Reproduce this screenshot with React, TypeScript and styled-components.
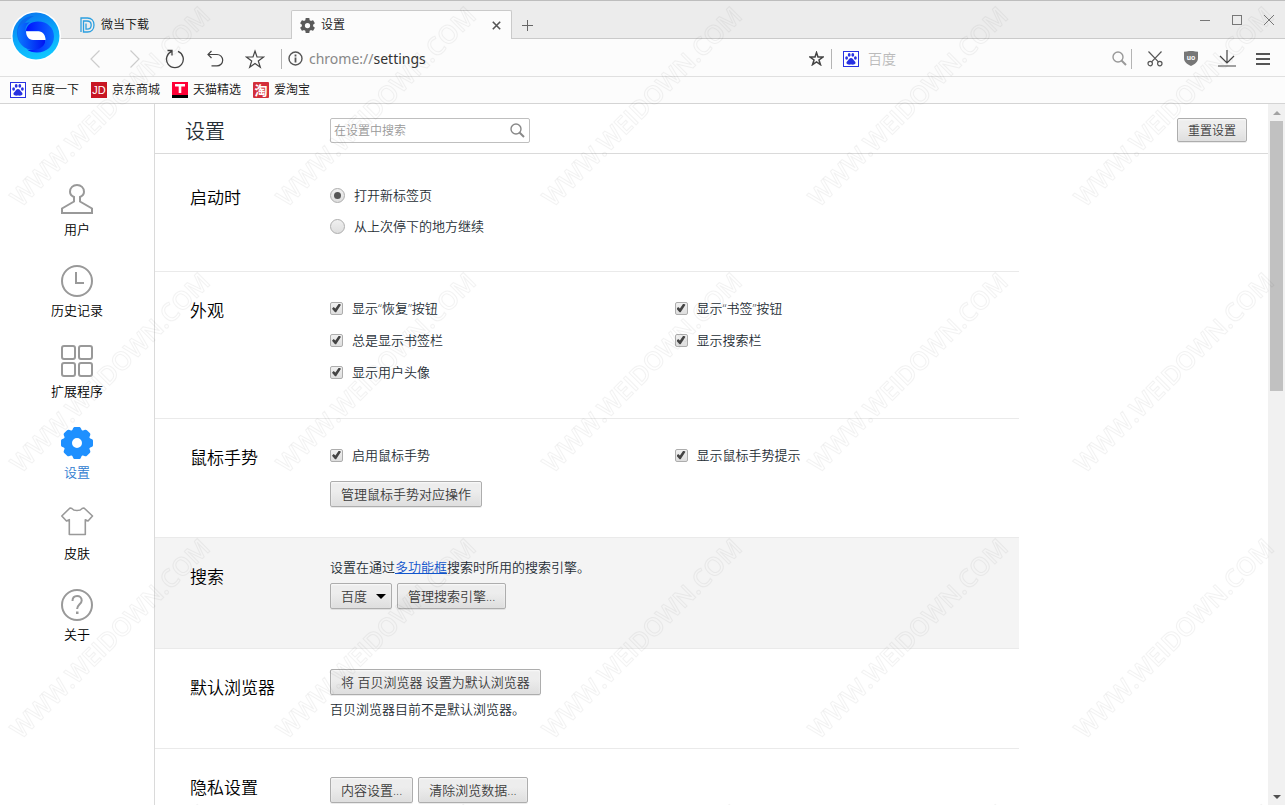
import React from "react";
import styled, { createGlobalStyle, css } from "styled-components";

const Global = createGlobalStyle`
  *, *::before, *::after { box-sizing: border-box; }
  body { margin: 0; background: #fff; overflow: hidden; }
  body, button, input, select {
    font-family: "Open Sans", "Noto Sans CJK SC", sans-serif;
    font-weight: 350;
  }
  button, input, select { margin: 0; padding: 0; }
`;

const Window = styled.div`
  position: relative;
  display: flex;
  flex-direction: column;
  height: 100vh;
  overflow: hidden;
  color: #262e36;
  font-size: 13px;
  line-height: 18px;
`;

const Watermark = styled.svg`
  position: absolute;
  inset: 0;
  width: 100%;
  height: 100%;
  pointer-events: none;
  text {
    font-family: "Open Sans", sans-serif;
    font-size: 25px;
    font-weight: 600;
    fill: none;
    stroke: rgba(0, 0, 0, 0.05);
    stroke-width: 1;
  }
`;

const Logo = styled.svg`
  position: absolute;
  left: 11px;
  top: 11px;
  width: 50px;
  height: 50px;
`;

const TabBar = styled.header`
  display: flex;
  align-items: flex-end;
  height: 39px;
  padding-left: 71px;
  border-top: 1px solid #bdbdbd;
  background: #ececec;
  box-shadow: inset 0 -1px #cacaca;
`;

const Tab = styled.div<{ $active?: boolean }>`
  display: flex;
  align-items: center;
  gap: 6px;
  width: ${(p) => (p.$active ? 221 : 220)}px;
  height: 29px;
  padding: 0 9px 0 8px;
  border: 1px solid transparent;
  border-bottom: 0;
  color: #111;
  font-size: 12px;
  ${(p) =>
    p.$active &&
    css`
      border-color: #cacaca;
      border-radius: 2px 2px 0 0;
      background: #fcfcfc;
    `}
`;

const TabTitle = styled.span`
  flex: 1;
`;

const IconButton = styled.button<{ $w?: number }>`
  display: flex;
  align-items: center;
  justify-content: center;
  flex: none;
  width: ${(p) => p.$w ?? 20}px;
  height: 28px;
  border: 0;
  background: none;
  svg { display: block; }
`;

const TabClose = styled(IconButton)`
  height: 20px;
`;

const WindowControls = styled.div`
  display: flex;
  align-self: flex-start;
  margin-left: auto;
  padding-top: 5px;
`;

const Toolbar = styled.div`
  display: flex;
  align-items: center;
  height: 38px;
  padding: 2px 9px 0 75px;
  border-bottom: 1px solid #e0e0e0;
  background: #fcfcfc;
`;

const Divider = styled.span`
  width: 1px;
  height: 20px;
  background: #b4b4b4;
`;

const Address = styled.div`
  display: flex;
  flex: 1;
  align-items: center;
  gap: 6px;
  margin-left: 6px;
  padding-left: 6px;
  border-left: 1px solid #b4b4b4;
  color: #888;
  font-family: "Noto Sans", sans-serif;
  font-size: 14px;
  font-weight: 400;
  line-height: 20px;
  b { font-weight: 400; color: #333; }
`;

const SearchBox = styled.label`
  display: flex;
  align-items: center;
  gap: 9px;
  width: 299px;
  padding: 0 4px 0 11px;
`;

const SearchInput = styled.input`
  flex: 1;
  min-width: 0;
  border: 0;
  outline: 0;
  background: none;
  font-size: 14px;
  &::placeholder { color: #bbb; }
`;

const Bookmarks = styled.nav`
  display: flex;
  align-items: center;
  gap: 12px;
  height: 27px;
  padding-left: 10px;
  border-bottom: 1px solid #d4d4d4;
  background: #fcfcfc;
`;

const Bookmark = styled.a`
  display: flex;
  align-items: center;
  gap: 5px;
  color: #111;
  font-size: 12px;
  text-decoration: none;
`;

const Body = styled.div`
  display: flex;
  flex: 1;
  min-height: 0;
`;

const Sidebar = styled.nav`
  display: flex;
  flex-direction: column;
  align-items: center;
  gap: 26px;
  width: 155px;
  padding-top: 79px;
  border-right: 1px solid #dadada;
`;

const SideLink = styled.a<{ $active?: boolean }>`
  display: flex;
  flex-direction: column;
  align-items: center;
  gap: 5px;
  color: ${(p) => (p.$active ? "#2f7bd0" : "#000")};
  text-decoration: none;
  svg { display: block; overflow: visible; }
`;

const Main = styled.main`
  display: flex;
  flex: 1;
  flex-direction: column;
  min-width: 0;
  overflow: hidden;
`;

const PageHeader = styled.div`
  display: flex;
  flex: none;
  align-items: center;
  height: 50px;
  padding: 3px 21px 0 30px;
  border-bottom: 1px solid #dadada;
`;

const PageTitle = styled.h1`
  width: 145px;
  margin: 0;
  padding-top: 3px;
  font-size: 20px;
  font-weight: 350;
  line-height: 28px;
`;

const SettingsSearch = styled.label`
  display: flex;
  align-items: center;
  width: 200px;
  height: 25px;
  padding: 0 4px 0 3px;
  border: 1px solid #bfbfbf;
  border-radius: 2px;
  input { font-size: 12px; }
  input::placeholder { color: #999; }
`;

const ResetSlot = styled.div`
  margin-left: auto;
`;

const buttonFace = css`
  border: 1px solid #adadad;
  border-radius: 2px;
  background: linear-gradient(#ededed 38%, #dedede);
  box-shadow: 0 1px 0 rgba(0, 0, 0, 0.08), inset 0 1px 2px rgba(255, 255, 255, 0.75);
  color: #3c3c3c;
`;

const Button = styled.button<{ $small?: boolean }>`
  ${buttonFace}
  display: block;
  height: ${(p) => (p.$small ? 24 : 26)}px;
  padding: 0 10px ${(p) => (p.$small ? 0 : 2)}px;
  font-size: ${(p) => (p.$small ? 12 : 13)}px;
`;

const SelectBox = styled.span`
  position: relative;
  &::after {
    content: "";
    position: absolute;
    right: 6px;
    top: 11px;
    border: 5px solid transparent;
    border-top-color: #000;
    border-bottom: 0;
    pointer-events: none;
  }
`;

const Select = styled.select`
  ${buttonFace}
  display: block;
  appearance: none;
  width: 62px;
  height: 26px;
  padding: 0 10px 1px;
  font-size: 13px;
`;

const Sections = styled.div`
  max-width: 864px;
  padding-top: 5px;
`;

const SectionBox = styled.section<{ $bottom: number; $top: number; $shaded?: boolean }>`
  display: flex;
  align-items: flex-start;
  padding: ${(p) => p.$top}px 0 ${(p) => p.$bottom}px 35px;
  border-bottom: 1px solid #eaeaea;
  background: ${(p) => (p.$shaded ? "#f4f4f4" : "none")};
`;

const SectionTitle = styled.h2<{ $top: number }>`
  flex: none;
  width: 140px;
  margin: ${(p) => 28 - p.$top}px 0 0;
  color: #000;
  font-size: 17px;
  font-weight: 350;
  line-height: 22px;
`;

const Stack = styled.div<{ $gap: number }>`
  display: flex;
  flex: 1;
  flex-direction: column;
  gap: ${(p) => p.$gap}px;
`;

const Options = styled.div`
  display: grid;
  grid-template-columns: 1fr 1fr;
  row-gap: 16px;
`;

const Row = styled.div`
  display: flex;
  gap: 5px;
`;

const Text = styled.p`
  margin: 0;
  a { color: #15c; }
`;

const Option = styled.label`
  display: flex;
  align-items: center;
  gap: 9px;
  height: 16px;
`;

const boxFace = css`
  display: grid;
  place-items: center;
  flex: none;
  appearance: none;
  border: 1px solid #adadad;
  background: linear-gradient(#f0f0f0, #dedede);
`;

const Checkbox = styled.input`
  ${boxFace}
  width: 13px;
  height: 13px;
  border-radius: 2px;
  &:checked::before {
    content: "";
    width: 9px;
    height: 9px;
    background: #444;
    clip-path: polygon(0 58%, 18% 40%, 38% 56%, 76% 0, 100% 14%, 46% 98%, 34% 98%);
  }
`;

const Radio = styled.input`
  ${boxFace}
  width: 15px;
  height: 15px;
  border-radius: 50%;
  &:checked::before {
    content: "";
    width: 7px;
    height: 7px;
    border-radius: 50%;
    background: #555;
  }
`;

const Scrollbar = styled.div`
  display: flex;
  flex-direction: column;
  align-items: center;
  width: 17px;
  background: #f1f1f1;
`;

const ScrollArrow = styled.span<{ $down?: boolean }>`
  display: flex;
  align-items: center;
  justify-content: center;
  height: 17px;
  &::before {
    content: "";
    border: 4px solid transparent;
    ${(p) =>
      p.$down
        ? "border-top-color: #505050; border-bottom: 0;"
        : "border-bottom-color: #a3a3a3; border-top: 0;"}
  }
`;

const Thumb = styled.span`
  width: 13px;
  height: 270px;
  margin-bottom: auto;
  background: #c1c1c1;
`;

const Gear = ({ size, color }: { size: number; color: string }) => (
  <svg width={size} height={size} viewBox="2 2 20 20" fill={color}>
    <path d="M19.43 12.98c.04-.32.07-.64.07-.98s-.03-.66-.07-.98l2.11-1.65c.19-.15.24-.42.12-.64l-2-3.46c-.12-.22-.39-.3-.61-.22l-2.49 1c-.52-.4-1.08-.73-1.69-.98l-.38-2.65C14.46 2.18 14.25 2 14 2h-4c-.25 0-.46.18-.49.42l-.38 2.65c-.61.25-1.17.59-1.69.98l-2.49-1c-.23-.09-.49 0-.61.22l-2 3.46c-.13.22-.07.49.12.64l2.11 1.65c-.04.32-.07.65-.07.98s.03.66.07.98l-2.11 1.65c-.19.15-.24.42-.12.64l2 3.46c.12.22.39.3.61.22l2.49-1c.52.4 1.08.73 1.69.98l.38 2.65c.03.24.24.42.49.42h4c.25 0 .46-.18.49-.42l.38-2.65c.61-.25 1.17-.59 1.69-.98l2.49 1c.23.09.49 0 .61-.22l2-3.46c.12-.22.07-.49-.12-.64l-2.11-1.65zM12 15.500a3.500 3.500 0 1 1 0-7 3.500 3.500 0 0 1 0 7z" />
  </svg>
);

const Paw = () => (
  <svg width="16" height="16" viewBox="0 0 16 16">
    <rect x=".5" y=".5" width="15" height="15" fill="#fff" stroke="#2932e1" />
    <g fill="#2932e1">
      <ellipse cx="3.600" cy="7" rx="1.400" ry="1.700" />
      <ellipse cx="6.200" cy="3.900" rx="1.400" ry="1.800" />
      <ellipse cx="9.800" cy="3.900" rx="1.400" ry="1.800" />
      <ellipse cx="12.400" cy="7" rx="1.400" ry="1.700" />
      <path d="M8 7c1.500 0 2 1.400 3 2.400 1.200 1.100 1.900 2 1.400 3.200-.6 1.300-2.500 1-4.400 1s-3.800.3-4.400-1c-.5-1.200.2-2.100 1.400-3.200 1-1 1.500-2.400 3-2.400z" />
    </g>
  </svg>
);

const Magnifier = ({ color }: { color: string }) => (
  <svg width="15" height="15" viewBox="0 0 15 15" fill="none" stroke={color}>
    <circle cx="6" cy="6" r="5" strokeWidth="1.400" />
    <path d="M9.500 9.500l4.500 4.500" strokeWidth="2" />
  </svg>
);

const Star = ({ size, width }: { size: number; width: number }) => (
  <svg width={size} height={size} viewBox="0 0 20 20" fill="none" stroke="#444" strokeWidth={width}>
    <path d="M10 2l2 5.900 6.600.1-5.300 4 2 6.200L10 14.500l-5.300 3.700 2-6.200-5.300-4L8 7.900z" />
  </svg>
);

const Badge = styled.svg`
  width: 16px;
  height: 16px;
  text {
    fill: #fff;
    font-family: "Liberation Sans", "Noto Sans CJK SC", sans-serif;
    font-weight: 700;
    text-anchor: middle;
  }
`;

const SideIcon = ({ children }: { children: React.ReactNode }) => (
  <svg width="32" height="32" viewBox="0 0 32 32" fill="none" stroke="#999" strokeWidth="2">
    {children}
  </svg>
);

const sideItems = [
  {
    label: "用户",
    icon: (
      <SideIcon>
        <path d="M13 18.500v-4.500C10.500 13 9 11 9 8.800 9 4.800 12 2 16 2s7 2.800 7 6.800c0 2.200-1.500 4.200-4 5.200v4.500L31 25.500V30H1v-4.500z" />
      </SideIcon>
    ),
  },
  {
    label: "历史记录",
    icon: (
      <SideIcon>
        <circle cx="16" cy="17" r="15" />
        <path d="M15 8v11h8" />
      </SideIcon>
    ),
  },
  {
    label: "扩展程序",
    icon: (
      <SideIcon>
        <rect x="1" y="1" width="13" height="13" rx="2" />
        <rect x="18" y="1" width="13" height="13" rx="2" />
        <rect x="1" y="18" width="13" height="13" rx="2" />
        <rect x="18" y="18" width="13" height="13" rx="2" />
      </SideIcon>
    ),
  },
  {
    label: "设置",
    active: true,
    icon: (
      <svg width="32" height="32" viewBox="0 -1 32 32" fill="#1e90ff">
        <path d="M16 2.500a13.500 13.500 0 1 0 0 27 13.500 13.500 0 0 0 0-27zm0 8.500a5 5 0 1 1 0 10 5 5 0 0 1 0-10z" fillRule="evenodd" />
        {[0, 45, 90, 135, 180, 225, 270, 315].map((angle) => (
          <path key={angle} transform={`rotate(${angle} 16 16)`} d="M10.500 5l1.500-3.500c.4-1 1-1.500 2-1.500h4c1 0 1.600.5 2 1.500L21.500 5z" />
        ))}
      </svg>
    ),
  },
  {
    label: "皮肤",
    icon: (
      <SideIcon>
        <path
          strokeWidth="1.600"
          strokeLinejoin="round"
          d="M11 1.600 9 1 .8 9l4.700 5 2.800-1.300V27.500h16V12.700l2.700 1.300 4.500-5L23 1l-2 .6c-1.800 2.600-8.200 2.600-10 0z"
        />
      </SideIcon>
    ),
  },
  {
    label: "关于",
    icon: (
      <SideIcon>
        <circle cx="16" cy="17" r="15" />
        <path d="M11.500 13c0-3.200 2-5 4.600-5s4.600 1.700 4.600 4.400c0 3.600-4.600 4.200-4.600 8.600" />
        <path d="M15 23.500h2.500v2.500H15z" fill="#999" stroke="none" />
      </SideIcon>
    ),
  },
];

const CheckOption = ({ children }: { children: React.ReactNode }) => (
  <Option>
    <Checkbox type="checkbox" defaultChecked />
    {children}
  </Option>
);

type SectionProps = {
  title: string;
  top?: number;
  bottom: number;
  gap?: number;
  shaded?: boolean;
  children: React.ReactNode;
};

const Section = ({ title, top = 28, bottom, gap = 7, shaded, children }: SectionProps) => (
  <SectionBox $top={top} $bottom={bottom} $shaded={shaded}>
    <SectionTitle $top={top}>{title}</SectionTitle>
    <Stack $gap={gap}>{children}</Stack>
  </SectionBox>
);

export default function App() {
  return (
    <Window>
      <Global />
      <TabBar>
        <Tab>
          <svg width="15" height="16" viewBox="0 0 15 16" fill="none" stroke="#2b9fe0" strokeWidth="1.300">
            <path d="M1 15V1h6.500c4 0 6.500 3 6.500 7s-2.500 7-6.500 7H3.500V4H7c2.800 0 4.200 1.500 4.200 4S9.800 12.200 7 12.200H6V6.500" />
          </svg>
          <TabTitle>微当下载</TabTitle>
        </Tab>
        <Tab $active>
          <Gear size={15} color="#5a5a5a" />
          <TabTitle>设置</TabTitle>
          <TabClose $w={12} aria-label="关闭标签页">
            <svg width="9" height="9" viewBox="0 0 9 9" stroke="#555" strokeWidth="1.600">
              <path d="M.8.800l7.400 7.400M8.200.800.800 8.200" />
            </svg>
          </TabClose>
        </Tab>
        <IconButton $w={31} aria-label="新标签页">
          <svg width="11" height="11" viewBox="0 0 11 11" stroke="#666">
            <path d="M5.500 0v11M0 5.500h11" />
          </svg>
        </IconButton>
        <WindowControls>
          <IconButton $w={32} aria-label="最小化">
            <svg width="10" height="10" viewBox="0 0 10 10" stroke="#777">
              <path d="M0 5.500h10" />
            </svg>
          </IconButton>
          <IconButton $w={32} aria-label="最大化">
            <svg width="10" height="10" viewBox="0 0 10 10" fill="none" stroke="#777">
              <rect x=".5" y=".5" width="9" height="9" />
            </svg>
          </IconButton>
          <IconButton $w={32} aria-label="关闭">
            <svg width="10" height="10" viewBox="0 0 10 10" stroke="#777">
              <path d="M0 0l10 10M10 0L0 10" />
            </svg>
          </IconButton>
        </WindowControls>
      </TabBar>

      <Toolbar>
        <IconButton $w={40} aria-label="后退">
          <svg width="10" height="18" viewBox="0 0 10 18" fill="none" stroke="#ccc" strokeWidth="1.200">
            <path d="M9.500.5 1 9l8.500 8.500" />
          </svg>
        </IconButton>
        <IconButton $w={40} aria-label="前进">
          <svg width="10" height="18" viewBox="0 0 10 18" fill="none" stroke="#ccc" strokeWidth="1.200">
            <path d="M.5.5 9 9 .5 17.500" />
          </svg>
        </IconButton>
        <IconButton $w={40} aria-label="重新加载">
          <svg width="20" height="20" viewBox="0 0 20 20" fill="none" stroke="#444" strokeWidth="1.300">
            <path d="M13 2.400a8.400 8.400 0 1 1-6.200 0M2.500 1.500H7v5" />
          </svg>
        </IconButton>
        <IconButton $w={40} aria-label="恢复">
          <svg width="18" height="18" viewBox="0 0 18 18" fill="none" stroke="#444" strokeWidth="1.200">
            <path d="M5.500 1 2 4.500 5.500 8M2 4.500h9a5.700 5.700 0 0 1 0 11.400H5.500" />
          </svg>
        </IconButton>
        <IconButton $w={40} aria-label="书签">
          <Star size={20} width={1.200} />
        </IconButton>
        <Address>
          <svg width="15" height="15" viewBox="0 0 15 15" fill="none" stroke="#555" strokeWidth="1.400">
            <circle cx="7.500" cy="7.500" r="6.500" />
            <path d="M7.500 6.500v5M7.500 3.500v2" strokeWidth="1.800" />
          </svg>
          <span>
            chrome://<b>settings</b>
          </span>
        </Address>
        <IconButton $w={29} aria-label="添加书签">
          <Star size={15} width={2} />
        </IconButton>
        <Divider />
        <SearchBox>
          <Paw />
          <SearchInput placeholder="百度" aria-label="百度" />
          <Magnifier color="#999" />
        </SearchBox>
        <Divider />
        <IconButton $w={46} aria-label="截图">
          <svg width="16" height="16" viewBox="0 0 16 16" fill="none" stroke="#555" strokeWidth="1.200">
            <path d="M1.500.5l9.900 10.300M14.500.5 4.600 10.800" />
            <circle cx="3.200" cy="12.600" r="2.200" />
            <circle cx="12.800" cy="12.600" r="2.200" />
          </svg>
        </IconButton>
        <IconButton $w={26} aria-label="uBlock">
          <Badge viewBox="0 1 16 16">
            <path d="M8 0c2 1.300 4.300 1.800 7 1.800V8c0 4-3 6.300-7 8-4-1.700-7-4-7-8V1.800C3.700 1.800 6 1.300 8 0z" fill="#777" />
            <text x="8" y="10" fontSize="7">
              uo
            </text>
          </Badge>
        </IconButton>
        <IconButton $w={46} aria-label="下载">
          <svg width="18" height="17" viewBox="0 0 18 17" fill="none" stroke="#444" strokeWidth="1.200">
            <path d="M9 0v13M2 6l7 7 7-7M0 16h18" />
          </svg>
        </IconButton>
        <IconButton $w={26} aria-label="菜单">
          <svg width="14" height="12" viewBox="0 0 14 12" fill="#555">
            <path d="M0 0h14v2H0zM0 5h14v2H0zM0 10h14v2H0z" />
          </svg>
        </IconButton>
      </Toolbar>

      <Bookmarks>
        <Bookmark href="#baidu">
          <Paw />
          百度一下
        </Bookmark>
        <Bookmark href="#jd">
          <Badge viewBox="0 0 16 16">
            <rect width="16" height="16" fill="#c81623" />
            <text x="8" y="12" fontSize="11" style={{ fontWeight: 400 }}>
              JD
            </text>
          </Badge>
          京东商城
        </Bookmark>
        <Bookmark href="#tmall">
          <Badge viewBox="0 0 16 16">
            <rect width="16" height="16" fill="#ff0036" />
            <rect y="13" width="16" height="3" fill="#000" />
            <path d="M3 2h10v2.500H9.300V11H6.700V4.500H3z" fill="#fff" />
          </Badge>
          天猫精选
        </Bookmark>
        <Bookmark href="#taobao">
          <Badge viewBox="0 0 16 16">
            <rect width="16" height="16" rx="1" fill="#d32f3a" />
            <text x="8" y="13" fontSize="13">
              淘
            </text>
          </Badge>
          爱淘宝
        </Bookmark>
      </Bookmarks>

      <Body>
        <Sidebar>
          {sideItems.map((item) => (
            <SideLink key={item.label} href="#menu" $active={item.active}>
              {item.icon}
              {item.label}
            </SideLink>
          ))}
        </Sidebar>
        <Main>
          <PageHeader>
            <PageTitle>设置</PageTitle>
            <SettingsSearch>
              <SearchInput placeholder="在设置中搜索" aria-label="在设置中搜索" />
              <Magnifier color="#888" />
            </SettingsSearch>
            <ResetSlot>
              <Button $small>重置设置</Button>
            </ResetSlot>
          </PageHeader>
          <Sections>
            <Section title="启动时" bottom={37} gap={15}>
              <Option>
                <Radio type="radio" name="startup" defaultChecked />
                打开新标签页
              </Option>
              <Option>
                <Radio type="radio" name="startup" />
                从上次停下的地方继续
              </Option>
            </Section>
            <Section title="外观" bottom={38}>
              <Options>
                <CheckOption>显示“恢复”按钮</CheckOption>
                <CheckOption>显示“书签”按钮</CheckOption>
                <CheckOption>总是显示书签栏</CheckOption>
                <CheckOption>显示搜索栏</CheckOption>
                <CheckOption>显示用户头像</CheckOption>
              </Options>
            </Section>
            <Section title="鼠标手势" bottom={30} gap={18}>
              <Options>
                <CheckOption>启用鼠标手势</CheckOption>
                <CheckOption>显示鼠标手势提示</CheckOption>
              </Options>
              <Row>
                <Button>管理鼠标手势对应操作</Button>
              </Row>
            </Section>
            <Section title="搜索" top={20} bottom={39} shaded>
              <Text>
                设置在通过<a href="#omnibox">多功能框</a>搜索时所用的搜索引擎。
              </Text>
              <Row>
                <SelectBox>
                  <Select aria-label="搜索引擎">
                    <option>百度</option>
                  </Select>
                </SelectBox>
                <Button>管理搜索引擎...</Button>
              </Row>
            </Section>
            <Section title="默认浏览器" top={20} bottom={30} gap={5}>
              <Row>
                <Button>将 百贝浏览器 设置为默认浏览器</Button>
              </Row>
              <Text>百贝浏览器目前不是默认浏览器。</Text>
            </Section>
            <Section title="隐私设置" bottom={28}>
              <Row>
                <Button>内容设置...</Button>
                <Button>清除浏览数据...</Button>
              </Row>
            </Section>
          </Sections>
        </Main>
        <Scrollbar>
          <ScrollArrow />
          <Thumb />
          <ScrollArrow $down />
        </Scrollbar>
      </Body>

      <Logo viewBox="0 0 50 50">
        <defs>
          <linearGradient id="ring" x1=".3" y1="0" x2=".6" y2="1">
            <stop offset="0" stopColor="#0a78f0" />
            <stop offset=".5" stopColor="#0aa8fa" />
            <stop offset="1" stopColor="#12c8ff" />
          </linearGradient>
          <linearGradient id="upper" x1="0" y1="0" x2="1" y2="0">
            <stop offset="0" stopColor="#0010ff" />
            <stop offset="1" stopColor="#0a6cff" />
          </linearGradient>
          <linearGradient id="lower" x1="0" y1="0" x2="1" y2="0">
            <stop offset="0" stopColor="#0a78ff" />
            <stop offset="1" stopColor="#0010f0" />
          </linearGradient>
        </defs>
        <circle cx="25" cy="25" r="25" fill="#fff" />
        <circle cx="25" cy="25" r="23.500" fill="url(#ring)" />
        <path d="M6 22C6 12 13 5 23 5c-8 4-12 9-11 17 1 10 7 16 16 17-13 2-22-6-22-17z" fill="#0a62ee" opacity=".8" />
        <path d="M7 19c-1 12 6 21 18 20 7-.5 10-5 9.500-10L15 20.500c-1-3 0-7 4-9C12 11 8 14 7 19z" fill="url(#lower)" />
        <path d="M15 20.500c0-6 5-10 12-10 9 0 16 6 16 15 0 9-7 16-17 16-4 0-8-1-10-3 10 2 18-2 18.500-9.500 0-5-3-8.500-7-8.500z" fill="url(#upper)" />
        <path d="M15 20.300h12.500c4 0 7 3.700 7 8.700H22c-4.500 0-7-4-7-8.700z" fill="#fff" />
      </Logo>

      <Watermark aria-hidden="true">
        <defs>
          <pattern id="mark" width="266" height="266" patternUnits="userSpaceOnUse">
            <text transform="translate(21 208) rotate(-45)">WWW.WEIDOWN.COM</text>
          </pattern>
        </defs>
        <rect width="100%" height="100%" fill="url(#mark)" />
      </Watermark>
    </Window>
  );
}
